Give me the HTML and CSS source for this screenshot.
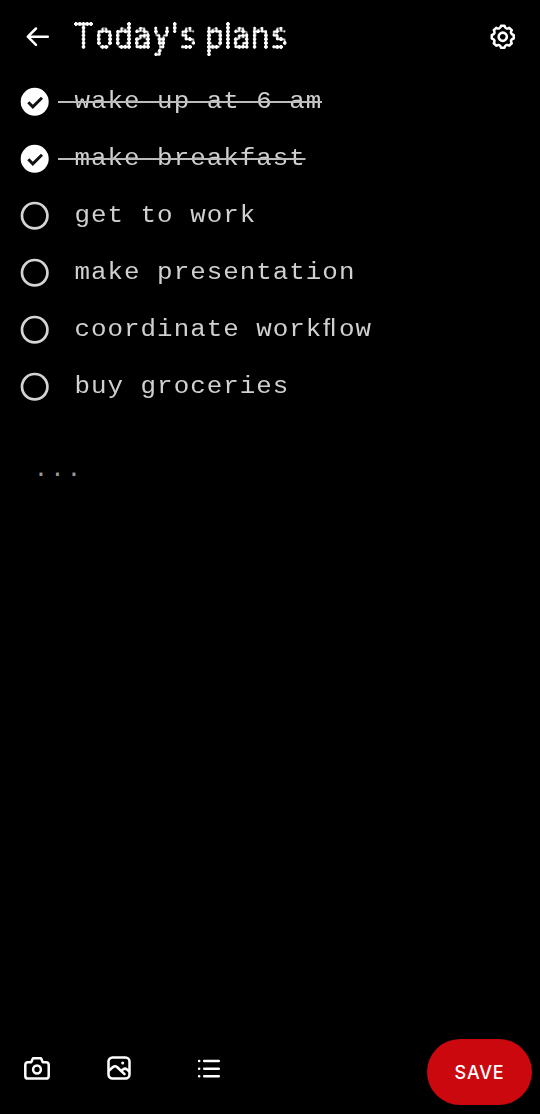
FILE: index.html
```html
<!DOCTYPE html>
<html lang="en">
<head>
<meta charset="utf-8">
<title>Today's plans</title>
<link rel="stylesheet" href="styles.css">
</head>
<body>
<div class="screen">
  <header class="header">
    <svg class="back" viewBox="0 0 26 22"><path d="M22.800 10.700H2.800M11 2.500L2.800 10.700l8.200 8.200"/></svg>
    <h1 class="title">
      <svg class="title-art" width="216" height="38" viewBox="0 0 216 38">
        <defs>
          <pattern id="dot" width="3.8" height="3.83" patternUnits="userSpaceOnUse"><circle cx="1.9" cy="1.915" r=".85" fill="#fff"/></pattern>
          <pattern id="disc" width="3.8" height="3.83" patternUnits="userSpaceOnUse"><circle cx="1.9" cy="1.915" r="2" fill="#fff"/></pattern>
          <mask id="dots" maskUnits="userSpaceOnUse" x="0" y="0" width="216" height="38"><rect width="216" height="38" fill="url(#dot)"/></mask>
          <mask id="discs" maskUnits="userSpaceOnUse" x="0" y="0" width="216" height="38"><rect width="216" height="38" fill="url(#disc)"/></mask>
          <filter id="bead" filterUnits="userSpaceOnUse" x="-3" y="-3" width="222" height="44" color-interpolation-filters="sRGB">
            <feGaussianBlur stdDeviation=".85"/>
            <feComponentTransfer><feFuncR type="linear" slope="0" intercept="1"/><feFuncG type="linear" slope="0" intercept="1"/><feFuncB type="linear" slope="0" intercept="1"/><feFuncA type="linear" slope="16" intercept="-.9"/></feComponentTransfer>
          </filter>
        </defs>
        <g mask="url(#discs)"><g filter="url(#bead)"><g mask="url(#dots)"><text class="dot-text" transform="scale(.8 1)" y="26.2" x="11.9 38 61.8 85.5 109.3 125.9 142.5 158 175.8 192.4 209 232.8 256.5">Today's plans</text></g></g></g>
      </svg>
    </h1>
    <svg class="gear" viewBox="-13 -13 26 26"><path d="M11.160 1.770Q7 2.900 9.140 6.640L6.640 9.140Q2.900 7 1.770 11.160L-1.770 11.160Q-2.900 7-6.640 9.140L-9.140 6.640Q-7 2.900-11.160 1.770L-11.160-1.770Q-7-2.900-9.140-6.640L-6.640-9.140Q-2.900-7-1.770-11.160L1.770-11.160Q2.900-7 6.640-9.140L9.140-6.640Q7-2.900 11.160-1.770Z"/><circle r="4.200"/></svg>
  </header>
  <ul class="list">
    <li class="item done"><svg class="box" viewBox="0 0 28 28"><circle cx="13.700" cy="13.800" r="14"/><path d="M7.300 14.300l4.500 4.500 9.200-9"/></svg><span class="label">wake up at 6 am</span></li>
    <li class="item done"><svg class="box" viewBox="0 0 28 28"><circle cx="13.700" cy="13.800" r="14"/><path d="M7.300 14.300l4.500 4.500 9.200-9"/></svg><span class="label">make breakfast</span></li>
    <li class="item"><svg class="box" viewBox="0 0 28 28"><circle cx="13.700" cy="13.700" r="12.700"/></svg><span class="label">get to work</span></li>
    <li class="item"><svg class="box" viewBox="0 0 28 28"><circle cx="13.700" cy="13.700" r="12.700"/></svg><span class="label">make presentation</span></li>
    <li class="item"><svg class="box" viewBox="0 0 28 28"><circle cx="13.700" cy="13.700" r="12.700"/></svg><span class="label">coordinate work<span class="lig">fl</span>ow</span></li>
    <li class="item"><svg class="box" viewBox="0 0 28 28"><circle cx="13.700" cy="13.700" r="12.700"/></svg><span class="label">buy groceries</span></li>
  </ul>
  <p class="more">...</p>
  <footer class="footer">
    <svg class="tool camera" viewBox="0 0 26 24"><path d="M4 6.200h3.200L9 2.200h8l1.800 4H22q2.700 0 2.700 2.700v11q0 2.700-2.700 2.700H4q-2.700 0-2.700-2.700v-11Q1.300 6.200 4 6.200Z"/><circle cx="13" cy="13.500" r="3.900"/></svg>
    <svg class="tool image" viewBox="0 0 24 24"><rect x="1.500" y="1.500" width="21" height="21" rx="4"/><path d="M2 14.500l4-3.500q2-1.500 4 0l7.500 7.200M14.500 14.700l1.500-1.300q2-1.500 4 0l2 1.800"/><circle class="fill" cx="15.700" cy="7" r="1.500"/></svg>
    <svg class="tool lines" viewBox="0 0 24 20"><path d="M7.200 2h14.600M7.200 9.700h14.600M7.200 17.300h14.600M2.100 2h.1M2.100 9.700h.1M2.100 17.300h.1"/></svg>
    <button class="save">SAVE</button>
  </footer>
</div>
</body>
</html>
```
FILE: styles.css
```css
* { box-sizing: border-box; }
body { margin: 0; background: #000; }
svg { display: block; flex: none; overflow: visible; fill: none; stroke: #fff; stroke-width: 2.500; stroke-linecap: round; stroke-linejoin: round; }
.screen { width: 540px; height: 1114px; background: #000; display: flex; flex-direction: column; overflow: hidden; }
.header { height: 73px; flex: none; display: flex; align-items: center; padding: 0 24.500px 0 25px; }
.back { width: 26px; height: 22px; }
.title { margin: 8px 0 0 22.500px; flex: 1; }
.title-art { stroke: none; }
.dot-text { font: 400 35px "DejaVu Sans", sans-serif; fill: #fff; stroke: #fff; stroke-width: 1.100px; text-anchor: middle; }
.gear { width: 25.500px; height: 25.500px; stroke-width: 2.600; }
.list { margin: 0; padding: 0 0 0 21px; list-style: none; }
.item { height: 57px; display: flex; align-items: center; }
.box { width: 28px; height: 28px; stroke: #d4d4d4; stroke-width: 2.700; }
.done .box circle { fill: #fff; stroke: none; }
.done .box path { stroke: #111; stroke-width: 3; stroke-linecap: butt; stroke-linejoin: miter; }
.label { position: relative; margin-left: 9px; padding-left: 15px; font: 400 23.500px/30px "Liberation Mono", monospace; letter-spacing: .920px; color: #d0d0d0; white-space: pre; transform: scaleX(1.100); transform-origin: 0 50%; }
.done .label::after { content: ""; position: absolute; left: 0; right: 0; top: 14px; height: 2px; background: #bbb; }
.lig { display: inline-block; width: 15.020px; line-height: 20px; font-family: "Liberation Sans", sans-serif; letter-spacing: .200px; padding-left: .500px; }
.more { margin: 38px 0 0 34px; font: 400 23px/30px "DejaVu Sans Mono", monospace; letter-spacing: 2.650px; color: #999; }
.footer { margin-top: auto; height: 76px; display: flex; align-items: flex-start; padding: 1px 8px 0 23.700px; }
.tool { margin-top: 17px; height: 24px; }
.camera { width: 26px; }
.image { width: 24px; margin-left: 57.300px; }
.lines { width: 24px; height: 20px; margin: 19.500px 0 0 66px; }
.fill { fill: #fff; stroke: none; }
.save { margin-left: auto; width: 105px; height: 66px; border: 0; border-radius: 33px; background: #cb080e; color: #fff; font: 500 18px Inter, Arial, sans-serif; letter-spacing: .8px; padding: 0; }
```
